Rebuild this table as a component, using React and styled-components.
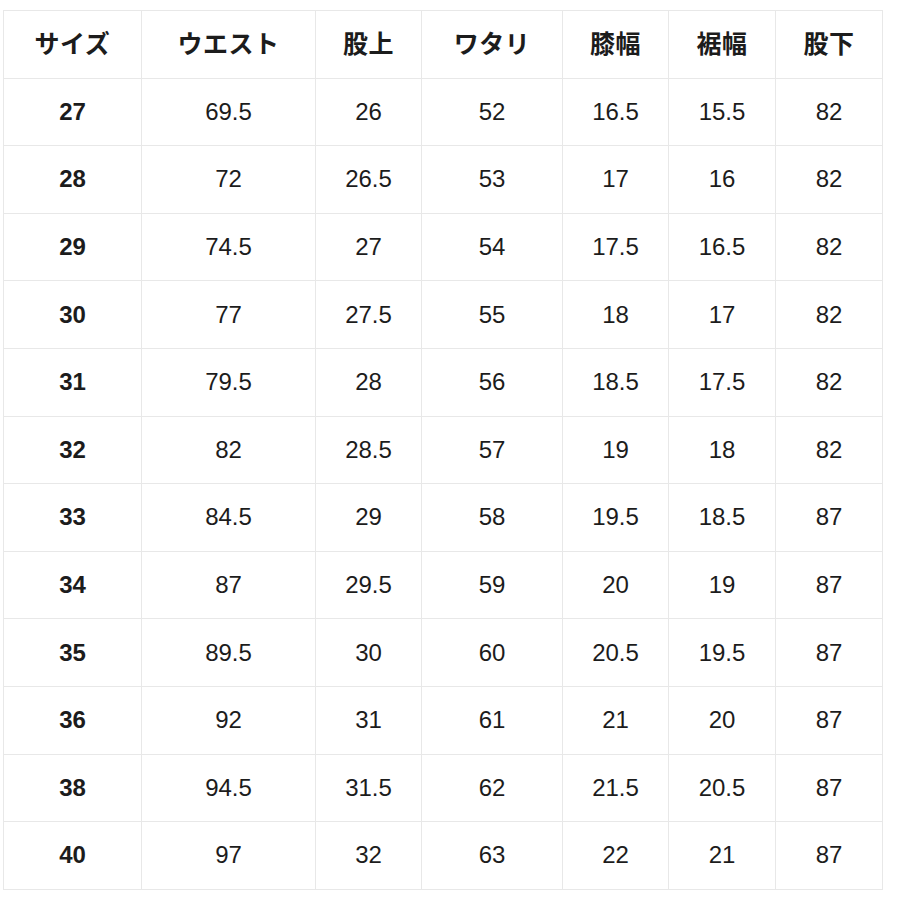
import React from 'react';
import styled, { createGlobalStyle } from 'styled-components';

const GlobalStyle = createGlobalStyle`
  body {
    margin: 0;
    background: #ffffff;
    font-family: "Liberation Sans", Arial, "Noto Sans CJK JP", sans-serif;
    color: #1c1c1c;
  }
`;

const Page = styled.div`
  padding: 10px 0 0 3px;
`;

const Table = styled.div`
  display: grid;
  grid-template-columns: 138px 174px 106px 141px 106px 107px 107px;
  grid-auto-rows: 67.6px;
  width: max-content;
  border-left: 1px solid #e8e8e8;
  border-top: 1px solid #e8e8e8;
`;

const Cell = styled.div`
  box-sizing: border-box;
  display: flex;
  align-items: center;
  justify-content: center;
  border-right: 1px solid #e8e8e8;
  border-bottom: 1px solid #e8e8e8;
  font-size: 24px;
  font-weight: ${(p) => (p.$bold ? 700 : 400)};
  font-family: "Liberation Sans", Arial, sans-serif;
`;

const HeadCell = styled(Cell)`
  font-family: "Noto Sans CJK JP", "Liberation Sans", sans-serif;
  font-size: 25px;
  font-weight: 700;
  padding-bottom: 5px;
  letter-spacing: 0.5px;
`;

const headers = ['サイズ', 'ウエスト', '股上', 'ワタリ', '膝幅', '裾幅', '股下'];

const rows = [
  ['27', '69.5', '26', '52', '16.5', '15.5', '82'],
  ['28', '72', '26.5', '53', '17', '16', '82'],
  ['29', '74.5', '27', '54', '17.5', '16.5', '82'],
  ['30', '77', '27.5', '55', '18', '17', '82'],
  ['31', '79.5', '28', '56', '18.5', '17.5', '82'],
  ['32', '82', '28.5', '57', '19', '18', '82'],
  ['33', '84.5', '29', '58', '19.5', '18.5', '87'],
  ['34', '87', '29.5', '59', '20', '19', '87'],
  ['35', '89.5', '30', '60', '20.5', '19.5', '87'],
  ['36', '92', '31', '61', '21', '20', '87'],
  ['38', '94.5', '31.5', '62', '21.5', '20.5', '87'],
  ['40', '97', '32', '63', '22', '21', '87'],
];

const App = () => {
  return (
    <Page>
      <GlobalStyle />
      <Table>
        {headers.map((h) => (
          <HeadCell key={h}>{h}</HeadCell>
        ))}
        {rows.map((row) =>
          row.map((v, i) => (
            <Cell key={row[0] + '-' + i} $bold={i === 0}>
              {v}
            </Cell>
          ))
        )}
      </Table>
    </Page>
  );
};

export default App;
